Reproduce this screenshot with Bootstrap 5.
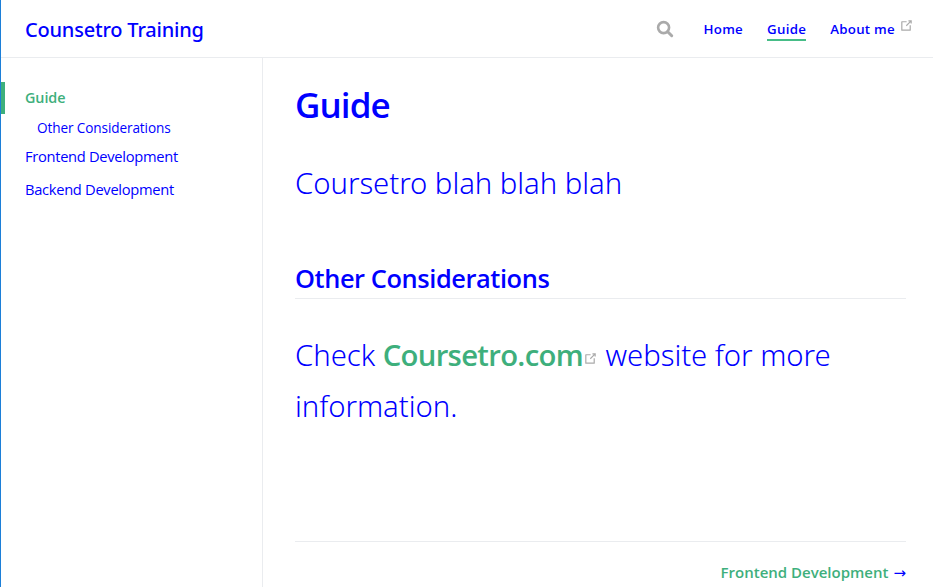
<!DOCTYPE html>
<html lang="en">
<head>
<meta charset="utf-8">
<meta name="viewport" content="width=device-width, initial-scale=1">
<title>Guide | Counsetro Training</title>
<link href="https://cdn.jsdelivr.net/npm/bootstrap@5.3.0/dist/css/bootstrap.min.css" rel="stylesheet">
<style>
body{font-family:"Segoe UI","Open Sans","Noto Sans",sans-serif;color:#00f;background:#fff;border-left:1px solid #1c7fd8;height:100vh;overflow:hidden}
a{color:inherit;text-decoration:none}
.top-bar{height:58px;border-bottom:1px solid #eaecef;padding:0 19px 0 24px}
.site-name{font-family:"Noto Sans",sans-serif;font-size:20px;font-weight:500;letter-spacing:-.2px;line-height:28px;padding-top:3px}
.top-links{font-size:13.3px;letter-spacing:.27px;font-weight:600;line-height:22px;gap:24px}
.top-links a{border-bottom:2px solid transparent;padding-top:2px;height:25px;white-space:nowrap}
.top-links .current{border-color:#46bd87}
.search-icon{width:18px;height:18px;margin-right:6px}
.out-icon{width:15px;height:15px;color:#aaa}
.side{width:262px;border-right:1px solid #eaecef;padding-top:24px;font-size:14.7px;font-weight:400}
.side a{display:block;padding-left:24px;line-height:22px}
.side .current{border-left:4px solid #3eaf7c;padding:5px 0 5px 20px;font-weight:600;color:#3eaf7c;font-size:14.4px;letter-spacing:-.1px}
.side .sub{font-size:13.6px;padding-left:36px;line-height:20px;margin:4px 0 7px;letter-spacing:-.11px}
.side .page{margin-bottom:11px;letter-spacing:-.3px}
.doc{padding:0 27px 0 32px}
.doc h1{font-size:35px;font-weight:600;line-height:44px;margin:25px 0 31px;letter-spacing:-.9px}
.doc p{font-family:"Noto Sans",sans-serif;font-size:29.3px;font-weight:300;line-height:51px;margin:0;letter-spacing:-.04px}
.doc h2{font-size:25.4px;font-weight:600;line-height:34px;margin:52px 0 31px;padding-bottom:3px;border-bottom:1px solid #eaecef;letter-spacing:-.42px}
.doc p a{font-family:"Open Sans",sans-serif;font-weight:600;color:#3eaf7c;letter-spacing:-.7px}
.next-page{border-top:1px solid #eaecef;margin-top:109px;padding-top:18px;font-size:15px;line-height:24px}
.next-page a{color:#3eaf7c;font-weight:600}
.arrow{font-family:"DejaVu Sans",sans-serif;font-size:15px;margin-left:5px}
</style>
</head>
<body class="d-flex flex-column">
<header class="top-bar d-flex align-items-center justify-content-between flex-shrink-0">
  <a href="#" class="site-name">Counsetro Training</a>
  <nav class="top-links d-flex align-items-center">
    <svg class="search-icon" viewBox="0 0 18 18" fill="none" stroke="#aaa"><circle cx="7.6" cy="7.6" r="5.5" stroke-width="2.6"/><path d="M11.7 11.7l4 4" stroke-width="3" stroke-linecap="round"/></svg>
    <a href="#">Home</a>
    <a href="#" class="current">Guide</a>
    <a href="#" class="d-flex">About me<svg class="out-icon ms-1" viewBox="0 0 100 100" fill="currentColor"><path d="M18.8,85.1h56c2.2,0,4-1.8,4-4v-32h-8v28h-48v-48h28v-8h-32c-2.2,0-4,1.8-4,4v56C14.8,83.3,16.6,85.1,18.8,85.1z"/><polygon points="45.7,48.7 51.3,54.3 77.2,28.5 77.2,37.2 85.2,37.2 85.2,14.9 62.8,14.9 62.8,22.9 71.5,22.9"/></svg></a>
  </nav>
</header>
<div class="d-flex flex-grow-1">
  <aside class="side flex-shrink-0">
    <a href="#" class="current">Guide</a>
    <a href="#other" class="sub">Other Considerations</a>
    <a href="#" class="page">Frontend Development</a>
    <a href="#" class="page">Backend Development</a>
  </aside>
  <main class="doc flex-grow-1">
    <h1>Guide</h1>
    <p class="intro">Coursetro blah blah blah</p>
    <h2 id="other">Other Considerations</h2>
    <p class="more">Check <a href="#">Coursetro.com</a><svg class="out-icon" viewBox="0 0 100 100" fill="currentColor"><path d="M18.8,85.1h56c2.2,0,4-1.8,4-4v-32h-8v28h-48v-48h28v-8h-32c-2.2,0-4,1.8-4,4v56C14.8,83.3,16.6,85.1,18.8,85.1z"/><polygon points="45.7,48.7 51.3,54.3 77.2,28.5 77.2,37.2 85.2,37.2 85.2,14.9 62.8,14.9 62.8,22.9 71.5,22.9"/></svg> website for more information.</p>
    <div class="next-page text-end"><a href="#">Frontend Development</a><span class="arrow">→</span></div>
  </main>
</div>
<script src="https://cdn.jsdelivr.net/npm/bootstrap@5.3.0/dist/js/bootstrap.bundle.min.js"></script>
</body>
</html>
